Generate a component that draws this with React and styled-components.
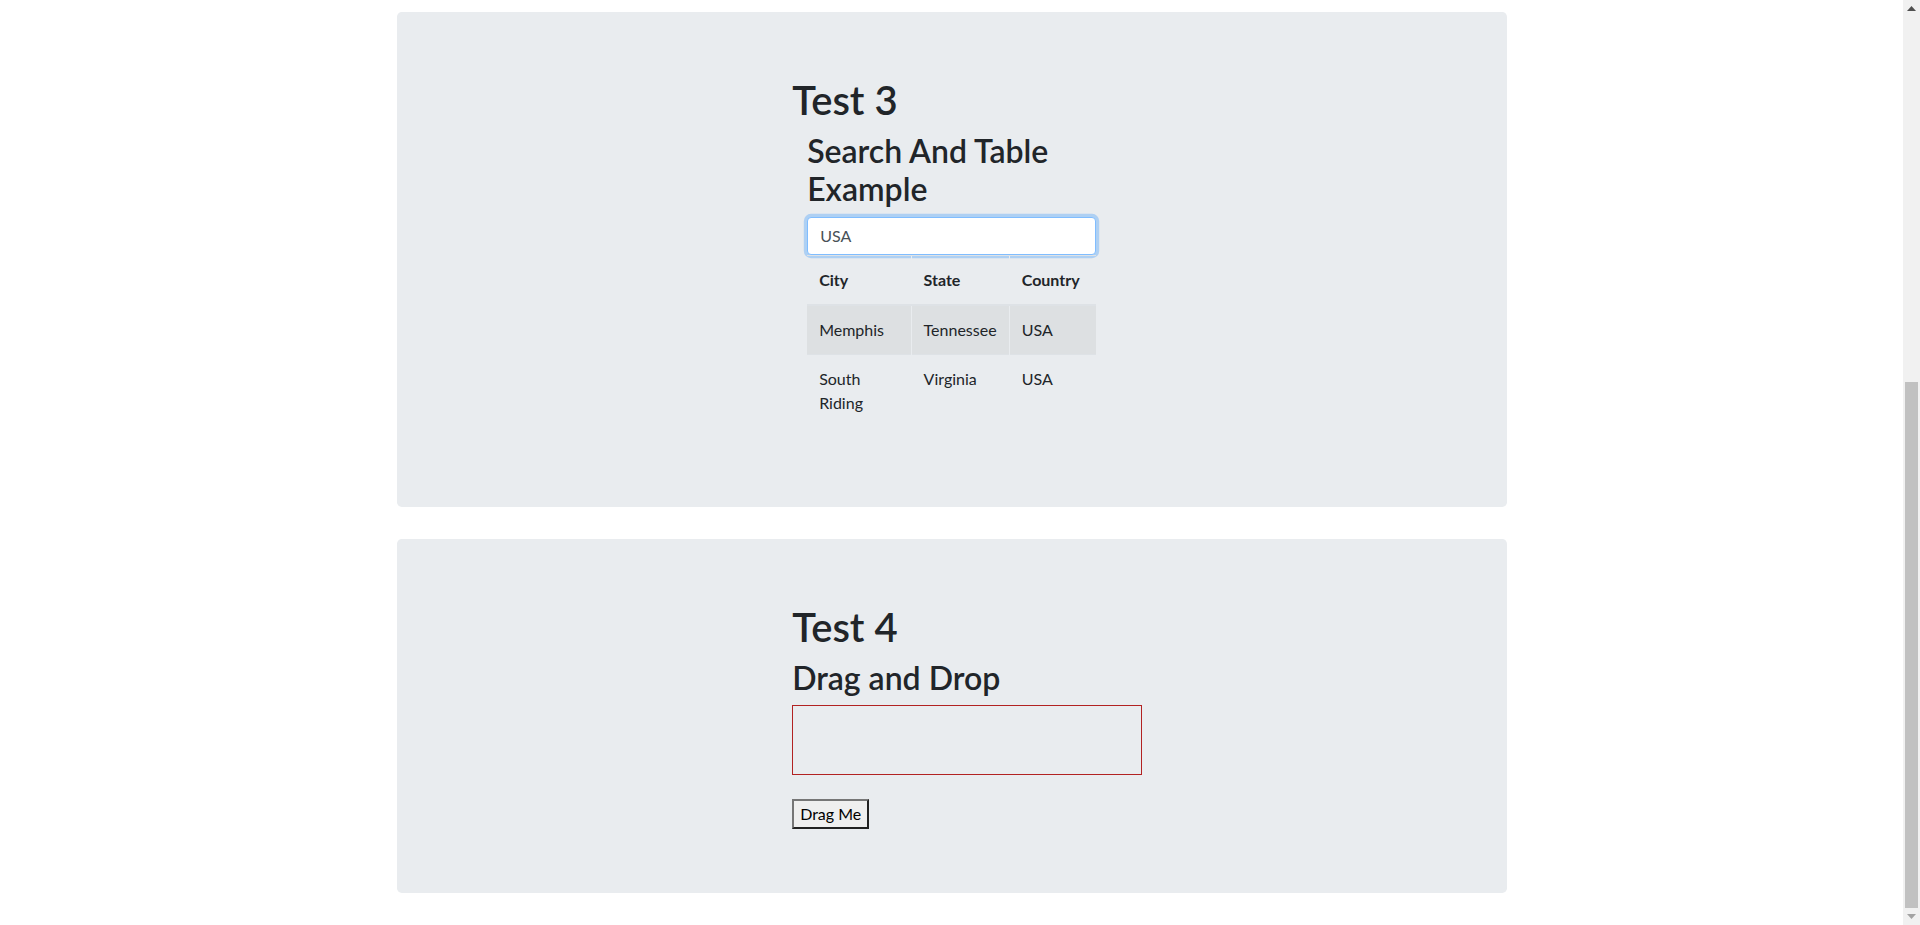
import React, { useState } from 'react';
import styled, { createGlobalStyle } from 'styled-components';

const GlobalStyle = createGlobalStyle`
  body {
    margin: 0 17px 0 0;
    font-family: Lato, "Noto Sans", "Liberation Sans", sans-serif;
    font-size: 16px;
    line-height: 1.5;
    color: #212529;
    background: #fff;
  }
  *, *::before, *::after {
    box-sizing: border-box;
  }
`;

const Container = styled.div`
  max-width: 1140px;
  margin: 0 auto;
  padding: 12px 15px 0;
`;

const Jumbotron = styled.section`
  background-color: #e9ecef;
  border-radius: 0.3rem;
  padding: 64px 32px;
  margin-bottom: 32px;
`;

const Row = styled.div`
  display: grid;
  grid-template-columns: repeat(3, minmax(0, 1fr));
`;

const Col = styled.div`
  grid-column: 2;
  padding: 0 15px;
`;

const Title = styled.h1`
  margin: 0 0 8px;
  font-size: 40px;
  font-weight: 600;
  line-height: 1.2;
`;

const Subtitle = styled.h2`
  margin: 0 0 8px;
  font-size: 32px;
  font-weight: 600;
  line-height: 1.2;
`;

const SearchBox = styled.div`
  padding: 0 15px;
`;

const SearchInput = styled.input`
  display: block;
  width: 100%;
  height: 38px;
  padding: 6px 12px;
  font-family: inherit;
  font-size: 16px;
  line-height: 1.5;
  color: #495057;
  background-color: #fff;
  border: 1px solid #80bdff;
  border-radius: 0.25rem;
  outline: 0;
  box-shadow: 0 0 0 0.2rem rgba(0, 123, 255, 0.25);
`;

const Table = styled.table`
  width: 100%;
  margin-bottom: 16px;
  border-collapse: collapse;
  table-layout: fixed;
  color: #212529;

  th,
  td {
    padding: 12px;
    border-top: 1px solid #dee2e6;
    text-align: left;
  }
  th + th,
  td + td {
    border-left: 1px solid #e9ecef;
  }
  thead th {
    vertical-align: bottom;
    font-weight: 700;
    border-bottom: 2px solid #dee2e6;
  }
  td {
    vertical-align: top;
  }
  tbody tr:nth-of-type(odd) {
    background-color: rgba(0, 0, 0, 0.05);
  }
`;

const DropZone = styled.div`
  width: 350px;
  height: 70px;
  border: 1px solid #b22222;
`;

const DragButton = styled.button`
  display: block;
  margin-top: 24px;
  padding: 1px 6px;
  font-family: inherit;
  font-size: 16px;
  line-height: 1.5;
  color: #000;
  background-color: #efefef;
  border-width: 2px;
  border-style: solid;
  border-color: #767676 #222 #222 #767676;
  border-radius: 0;
  cursor: move;
`;

// window scrollbar as it shows in the capture (page scrolled to the bottom)
const ScrollTrack = styled.div`
  position: fixed;
  top: 0;
  right: 0;
  width: 17px;
  height: 100vh;
  background: #f1f1f1;
  display: flex;
  flex-direction: column;
  align-items: center;
`;

const ScrollArrow = styled.div`
  flex: 0 0 17px;
  display: flex;
  align-items: center;
  justify-content: center;
  width: 100%;
`;

const ScrollSpace = styled.div`
  flex: 1;
  width: 100%;
  display: flex;
  flex-direction: column;
  justify-content: flex-end;
  padding: 0 2px;
`;

const ScrollThumb = styled.div`
  height: 59%;
  background: #c1c1c1;
`;

const Arrow = ({ up, color }) => (
  <svg width="9" height="5" viewBox="0 0 9 5">
    <path d={up ? 'M0 5 L4.5 0 L9 5 Z' : 'M0 0 L4.5 5 L9 0 Z'} fill={color} />
  </svg>
);

const cities = [
  { city: 'Memphis', state: 'Tennessee', country: 'USA' },
  { city: 'South Riding', state: 'Virginia', country: 'USA' },
  { city: 'Toronto', state: 'Ontario', country: 'Canada' },
];

const SearchTable = () => {
  const [query, setQuery] = useState('USA');
  const q = query.trim().toLowerCase();
  const rows = cities.filter(r =>
    [r.city, r.state, r.country].some(v => v.toLowerCase().includes(q)),
  );

  return (
    <SearchBox>
      <Subtitle>Search And Table Example</Subtitle>
      <SearchInput autoFocus value={query} onChange={e => setQuery(e.target.value)} />
      <Table>
        <colgroup>
          <col style={{ width: '36%' }} />
          <col style={{ width: '34%' }} />
          <col style={{ width: '30%' }} />
        </colgroup>
        <thead>
          <tr>
            <th>City</th>
            <th>State</th>
            <th>Country</th>
          </tr>
        </thead>
        <tbody>
          {rows.map(r => (
            <tr key={r.city}>
              <td>{r.city}</td>
              <td>{r.state}</td>
              <td>{r.country}</td>
            </tr>
          ))}
        </tbody>
      </Table>
    </SearchBox>
  );
};

const DragDrop = () => (
  <>
    <Subtitle>Drag and Drop</Subtitle>
    <DropZone onDragOver={e => e.preventDefault()} />
    <DragButton draggable>Drag Me</DragButton>
  </>
);

const App = () => (
  <>
    <GlobalStyle />
    <Container>
      <Jumbotron>
        <Row>
          <Col>
            <Title>Test 3</Title>
            <SearchTable />
          </Col>
        </Row>
      </Jumbotron>
      <Jumbotron>
        <Row>
          <Col>
            <Title>Test 4</Title>
            <DragDrop />
          </Col>
        </Row>
      </Jumbotron>
    </Container>
    <ScrollTrack>
      <ScrollArrow>
        <Arrow up color="#505050" />
      </ScrollArrow>
      <ScrollSpace>
        <ScrollThumb />
      </ScrollSpace>
      <ScrollArrow>
        <Arrow color="#a3a3a3" />
      </ScrollArrow>
    </ScrollTrack>
  </>
);

export default App;
